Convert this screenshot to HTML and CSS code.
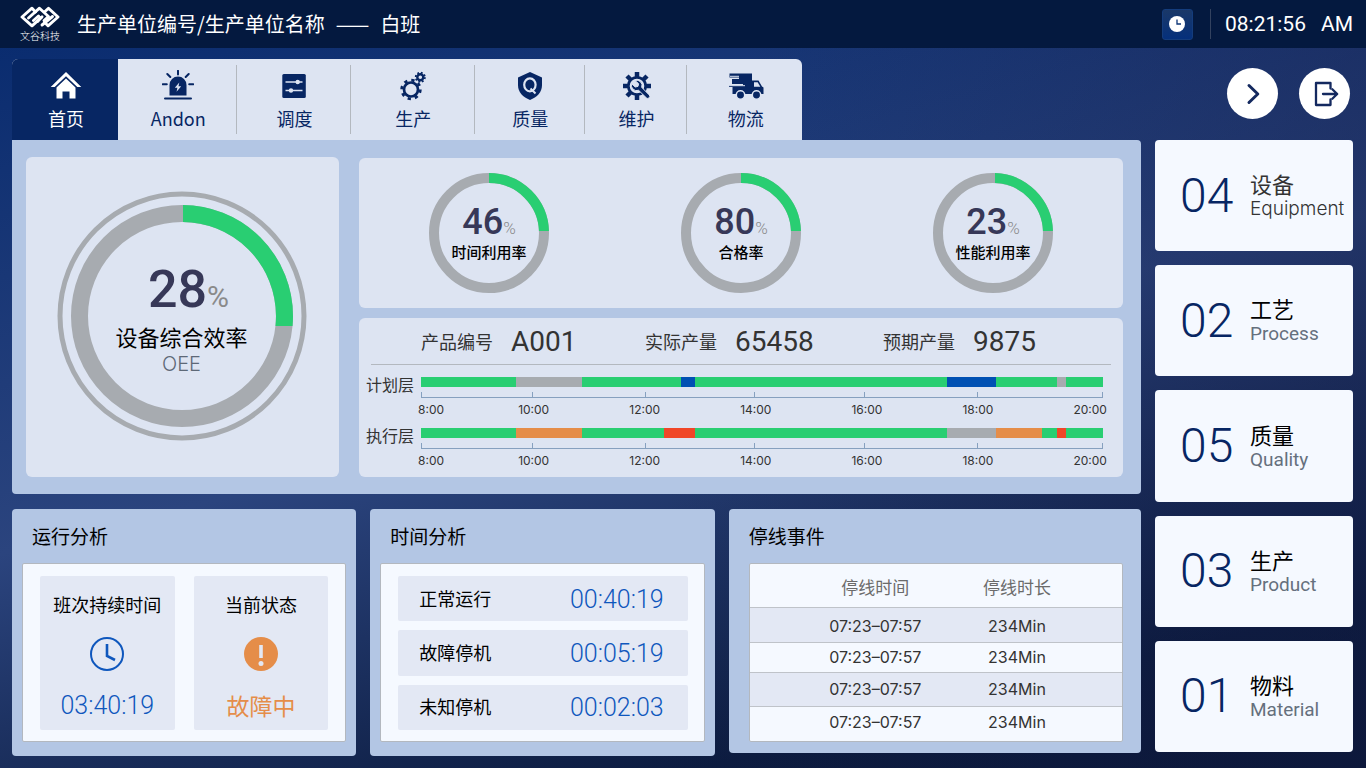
FILE: index.html
```html
<!DOCTYPE html>
<html lang="zh-CN">
<head>
<meta charset="utf-8">
<meta name="viewport" content="width=device-width, initial-scale=1">
<title>生产单位看板</title>
<link rel="stylesheet" href="styles.css">
</head>
<body>
<header class="topbar">
  <div class="brand">
    <svg class="brand-mark" viewBox="0 0 40 22" fill="none" stroke="currentColor" stroke-width="2.9" stroke-linejoin="round" stroke-linecap="round" aria-hidden="true">
      <path d="M15.500 6 12 2.200 2 11l10 8.800 10-9"/>
      <path d="M8.500 12 19.500 2.200l9 8.300-4.500 4"/>
      <path d="M13.500 14.500 18.500 10M17.500 15.500 21 11.500M24.500 16.200 28 19.800 38 11 28.500 2.200 25 5.500"/>
      <path d="M22 19 32.500 10.500"/>
    </svg>
    <span class="brand-name">文谷科技</span>
  </div>
  <h1 class="title"><span>生产单位编号/生产单位名称</span><span>——</span><span>白班</span></h1>
  <div class="clock">
    <span class="clock-icon">
      <svg viewBox="0 0 16 16" width="16" height="16" aria-hidden="true"><circle cx="8" cy="8" r="8" fill="#fff"/><path d="M8 3.500V8h4" fill="none" stroke="#0d3577" stroke-width="1.300"/></svg>
    </span>
    <time class="clock-time"><span>08:21:56</span><span>AM</span></time>
  </div>
</header>

<main class="layout">
  <nav class="tabs">
    <a class="tab tab-active" href="#home">
      <svg viewBox="0 0 32 32" aria-hidden="true"><path d="M16 2 0.700 17h4L16 6.300 27.300 17h4z"/><path d="M16 8.500 6.500 17.500V28.500h6V21.500h7v7h6v-11z"/></svg>
      <span>首页</span>
    </a>
    <a class="tab" href="#andon">
      <svg viewBox="0 0 32 32" aria-hidden="true"><path d="M7.500 25.500V15a8.500 8.500 0 0 1 17 0v10.500z"/><path d="M17.300 12.500 12.800 17.700h2.600l-.8 4 4.600-5.400h-2.700z" fill="#dde4f2"/><path d="M3 28.500h26M16 .800v3.600M5.300 4l3 3M26.700 4l-3 3M.800 14.200h4M27.200 14.200h4" fill="none" stroke="currentColor" stroke-width="2" stroke-linecap="round"/></svg>
      <span>Andon</span>
    </a>
    <a class="tab" href="#schedule">
      <svg viewBox="0 0 32 32" aria-hidden="true"><rect x="4.300" y="4" width="23.500" height="24" rx="1.500"/><path d="M7.500 12h17M7.500 20.500h17" stroke="#dde4f2" stroke-width="1.500"/><circle cx="19.700" cy="12" r="2.200" fill="#dde4f2"/><circle cx="13" cy="20.500" r="2.200" fill="#dde4f2"/></svg>
      <span>调度</span>
    </a>
    <a class="tab" href="#production">
      <svg viewBox="0 0 32 32" fill="none" stroke="currentColor" aria-hidden="true"><circle cx="14" cy="19.500" r="7" stroke-width="2.700"/><circle cx="14" cy="19.500" r="9.300" stroke-width="2.800" stroke-dasharray="3.250 4.055"/><circle cx="23.300" cy="7.300" r="3" stroke-width="2.400"/><circle cx="23.300" cy="7.300" r="4.600" stroke-width="1.800" stroke-dasharray="1.800 1.813"/></svg>
      <span>生产</span>
    </a>
    <a class="tab" href="#quality">
      <svg viewBox="0 0 32 32" aria-hidden="true"><path d="M16 2 28 7.500V15c0 7.500-5 12-12 15C9 27 4 22.500 4 15V7.500z"/><ellipse cx="15.900" cy="14.800" rx="5.700" ry="6.500" fill="none" stroke="#dde4f2" stroke-width="2.200"/><path d="M16.500 18.500 21.500 23.500" stroke="#dde4f2" stroke-width="2"/></svg>
      <span>质量</span>
    </a>
    <a class="tab" href="#maintenance">
      <svg viewBox="0 0 32 32" aria-hidden="true"><g fill="none" stroke="currentColor"><circle cx="16" cy="16" r="8.700" stroke-width="2.800"/><path stroke-width="4.500" d="M16 2v5M16 25v5M2 16h5M25 16h5M6 6l4 4M22 10l4-4M6 26l4-4"/></g><path d="M14 10.500a5.300 5.300 0 0 1 6.700 6.800l7.500 7.600a2 2 0 0 1-2.900 2.900l-7.700-7.500a5.300 5.300 0 0 1-6.900-6.600l3.500 3.300 2.800-.6.600-2.700z" stroke="#dde4f2" stroke-width="1"/></svg>
      <span>维护</span>
    </a>
    <a class="tab" href="#logistics">
      <svg class="wide" viewBox="0 0 36 32" aria-hidden="true"><path d="M1.500 3.500H24v20.500H4.500V17H1v-1.500h14V14H4V9h7V7.500H1.500z"/><path d="M23 10.500h7.500l3.500 6 1.500 1V24H23z"/><path d="M26 12.200h3.700l2.600 4.500H26z" fill="#dde4f2"/><path d="M1 12.700h3M1 15.700h16M2 6.300h9" stroke="#dde4f2" stroke-width="1"/><g stroke="#dde4f2" stroke-width="1.500"><circle cx="12.500" cy="25" r="4.200"/><circle cx="28.500" cy="25" r="4.200"/></g></svg>
      <span>物流</span>
    </a>
  </nav>

  <div class="actions">
    <button class="round-btn" type="button" aria-label="下一页">
      <svg viewBox="0 0 28 28" aria-hidden="true"><path d="M10 5.500 18.800 14 10 22.500" stroke-width="3"/></svg>
    </button>
    <button class="round-btn" type="button" aria-label="退出">
      <svg viewBox="0 0 28 28" aria-hidden="true"><path d="M19.500 8.500V3H5v22h14.500v-5.500" stroke-width="2.300"/><path d="M12 14h14M21.300 9.200 26.200 14l-4.900 4.800" stroke-width="2.300"/></svg>
    </button>
  </div>

  <div class="content">
    <section class="overview">
      <article class="card oee">
        <div class="gauge">
          <svg viewBox="0 0 250 250" fill="none" aria-hidden="true">
            <defs><clipPath id="arc-oee"><rect x="126" y="0" width="124" height="135"/></clipPath></defs>
            <circle class="ring-track" cx="125" cy="125" r="122" stroke-width="5"/>
            <circle class="ring-track" cx="125" cy="125" r="102.500" stroke-width="17"/>
            <circle class="ring-value" cx="125" cy="125" r="102.500" stroke-width="17" clip-path="url(#arc-oee)"/>
          </svg>
          <div class="gauge-text">
            <p class="gauge-num">28<small>%</small></p>
            <p class="gauge-label">设备综合效率</p>
            <p class="gauge-sub">OEE</p>
          </div>
        </div>
      </article>

      <div class="overview-side">
        <article class="card kpis">
          <div class="gauge gauge-small">
            <svg viewBox="0 0 120 120" fill="none" aria-hidden="true">
              <defs><clipPath id="arc-small"><rect x="60" y="0" width="60" height="58"/></clipPath></defs>
              <circle class="ring-track" cx="60" cy="60" r="55" stroke-width="10"/>
              <circle class="ring-value" cx="60" cy="60" r="55" stroke-width="10" clip-path="url(#arc-small)"/>
            </svg>
            <div class="gauge-text"><p class="gauge-num">46<small>%</small></p><p class="gauge-label">时间利用率</p></div>
          </div>
          <div class="gauge gauge-small">
            <svg viewBox="0 0 120 120" fill="none" aria-hidden="true">
              <circle class="ring-track" cx="60" cy="60" r="55" stroke-width="10"/>
              <circle class="ring-value" cx="60" cy="60" r="55" stroke-width="10" clip-path="url(#arc-small)"/>
            </svg>
            <div class="gauge-text"><p class="gauge-num">80<small>%</small></p><p class="gauge-label">合格率</p></div>
          </div>
          <div class="gauge gauge-small">
            <svg viewBox="0 0 120 120" fill="none" aria-hidden="true">
              <defs><clipPath id="arc-perf"><rect x="62" y="0" width="58" height="58"/></clipPath></defs>
              <circle class="ring-track" cx="60" cy="60" r="55" stroke-width="10"/>
              <circle class="ring-value" cx="60" cy="60" r="55" stroke-width="10" clip-path="url(#arc-perf)"/>
            </svg>
            <div class="gauge-text"><p class="gauge-num">23<small>%</small></p><p class="gauge-label">性能利用率</p></div>
          </div>
        </article>

        <article class="card output">
          <dl class="stats">
            <div class="stat"><dt>产品编号</dt><dd>A001</dd></div>
            <div class="stat"><dt>实际产量</dt><dd>65458</dd></div>
            <div class="stat"><dt>预期产量</dt><dd>9875</dd></div>
          </dl>
          <div class="timeline">
            <span class="timeline-name">计划层</span>
            <div class="timeline-body">
              <div class="bar">
                <i class="run" style="flex-grow:95"></i><i class="idle" style="flex-grow:66"></i><i class="run" style="flex-grow:99"></i><i class="plan" style="flex-grow:14"></i><i class="run" style="flex-grow:252"></i><i class="plan" style="flex-grow:49"></i><i class="run" style="flex-grow:61"></i><i class="idle" style="flex-grow:9"></i><i class="run" style="flex-grow:37"></i>
              </div>
              <div class="axis"><i style="flex-grow:111"></i><i style="flex-grow:113"></i><i style="flex-grow:109"></i><i style="flex-grow:111"></i><i style="flex-grow:113"></i><i style="flex-grow:125"></i></div>
              <div class="hours"><span>8:00</span><span>10:00</span><span>12:00</span><span>14:00</span><span>16:00</span><span>18:00</span><span>20:00</span></div>
            </div>
          </div>
          <div class="timeline">
            <span class="timeline-name">执行层</span>
            <div class="timeline-body">
              <div class="bar">
                <i class="run" style="flex-grow:95"></i><i class="warn" style="flex-grow:66"></i><i class="run" style="flex-grow:82"></i><i class="stop" style="flex-grow:31"></i><i class="run" style="flex-grow:252"></i><i class="idle" style="flex-grow:49"></i><i class="warn" style="flex-grow:46"></i><i class="run" style="flex-grow:15"></i><i class="stop" style="flex-grow:9"></i><i class="run" style="flex-grow:37"></i>
              </div>
              <div class="axis"><i style="flex-grow:111"></i><i style="flex-grow:113"></i><i style="flex-grow:109"></i><i style="flex-grow:111"></i><i style="flex-grow:113"></i><i style="flex-grow:125"></i></div>
              <div class="hours"><span>8:00</span><span>10:00</span><span>12:00</span><span>14:00</span><span>16:00</span><span>18:00</span><span>20:00</span></div>
            </div>
          </div>
        </article>
      </div>
    </section>

    <div class="panels">
      <section class="panel">
        <h2>运行分析</h2>
        <div class="box tiles">
          <div class="tile">
            <h3>班次持续时间</h3>
            <svg viewBox="0 0 34 34" width="34" height="34" fill="none" stroke="#0f57bd" aria-hidden="true"><circle cx="17" cy="17" r="16" stroke-width="2"/><path d="M17 7v12l8 4" stroke-width="2.600"/></svg>
            <p class="digits">03:40:19</p>
          </div>
          <div class="tile">
            <h3>当前状态</h3>
            <svg viewBox="0 0 34 34" width="34" height="34" aria-hidden="true"><circle cx="17" cy="17" r="17" fill="#e58d49"/><path d="M17 8v13" stroke="#e3e8f4" stroke-width="3.600"/><circle cx="17" cy="26.500" r="2.500" fill="#e3e8f4"/></svg>
            <p class="state">故障中</p>
          </div>
        </div>
      </section>

      <section class="panel">
        <h2>时间分析</h2>
        <dl class="box times">
          <div><dt>正常运行</dt><dd class="digits">00:40:19</dd></div>
          <div><dt>故障停机</dt><dd class="digits">00:05:19</dd></div>
          <div><dt>未知停机</dt><dd class="digits">00:02:03</dd></div>
        </dl>
      </section>

      <section class="panel panel-events">
        <h2>停线事件</h2>
        <div class="box">
          <table class="events">
            <thead><tr><th scope="col">停线时间</th><th scope="col">停线时长</th></tr></thead>
            <tbody>
              <tr><td>07:23–07:57</td><td>234Min</td></tr>
              <tr><td>07:23–07:57</td><td>234Min</td></tr>
              <tr><td>07:23–07:57</td><td>234Min</td></tr>
              <tr><td>07:23–07:57</td><td>234Min</td></tr>
            </tbody>
          </table>
        </div>
      </section>
    </div>
  </div>

  <aside class="sidebar">
    <a class="count count-current" href="#equipment"><strong>04</strong><span class="count-text"><b>设备</b><em>Equipment</em></span></a>
    <a class="count" href="#process"><strong>02</strong><span class="count-text"><b>工艺</b><em>Process</em></span></a>
    <a class="count" href="#quality-issues"><strong>05</strong><span class="count-text"><b>质量</b><em>Quality</em></span></a>
    <a class="count" href="#product"><strong>03</strong><span class="count-text"><b>生产</b><em>Product</em></span></a>
    <a class="count" href="#material"><strong>01</strong><span class="count-text"><b>物料</b><em>Material</em></span></a>
  </aside>
</main>
</body>
</html>
```
FILE: styles.css
```css
* { box-sizing: border-box; }

body, h1, h2, h3, p, dl, dd { margin: 0; font-weight: inherit; }

body {
  display: flex;
  flex-direction: column;
  min-height: 100vh;
  font-family: "Noto Sans CJK SC", sans-serif;
  font-weight: 400;
  color: #000;
  background:
    linear-gradient(100deg, rgba(18, 24, 64, 0) 50%, rgba(18, 24, 64, .4) 100%),
    linear-gradient(166deg, #072a6e 0%, #2b447e 50%, #0c1c40 85%, #0a1838 100%);
}

a { color: inherit; text-decoration: none; }
i, em { font-style: normal; }

/* Top bar */
.topbar {
  display: flex;
  align-items: center;
  height: 48px;
  padding: 0 13px 0 20px;
  background: #04193f;
  color: #fff;
}
.brand {
  display: flex;
  flex-direction: column;
  align-items: center;
  gap: 1px;
  margin-right: 17px;
}
.brand-mark { width: 40px; height: 22px; }
.brand-name { font-size: 10px; line-height: 14px; font-weight: 300; }
.title {
  display: flex;
  gap: 11px;
  font-size: 20px;
  line-height: 24px;
  font-weight: 400;
}
.clock {
  display: flex;
  align-items: center;
  margin-left: auto;
}
.clock-icon {
  display: grid;
  place-items: center;
  width: 31px;
  height: 31px;
  margin-right: 17px;
  border: 1px solid #143c7c;
  border-radius: 3px;
  background: linear-gradient(#1a3868, #05307c);
}
.clock-time {
  display: flex;
  gap: 15px;
  padding-left: 14px;
  border-left: 1px solid #33425f;
  font-family: Roboto, sans-serif;
  font-size: 21px;
  line-height: 30px;
}

/* Page grid */
.layout {
  flex: 1;
  display: grid;
  grid-template-columns: minmax(0, 1fr) 198px;
  grid-template-rows: 81px 1fr;
  column-gap: 14px;
  padding: 11px 13px 12px 12px;
}

/* Tabs */
.tabs {
  display: grid;
  grid-template-columns: 106fr 119fr 113fr 124fr 110fr 102fr 115fr;
  width: 70%;
  border-radius: 6px 6px 0 0;
  overflow: hidden;
  background: #dde4f2;
}
.tab {
  display: flex;
  flex-direction: column;
  align-items: center;
  gap: 4px;
  margin: 6px 0;
  padding: 5px 0 0 2px;
  border-right: 1px solid #b3b8bf;
  color: #072663;
  font-size: 18px;
  line-height: 24px;
}
.tab:last-child { border-right: 0; }
.tab svg { width: 32px; height: 32px; fill: currentColor; }
.tab svg[fill="none"] { fill: none; }
.tab svg.wide { width: 36px; }
.tab-active {
  margin: 0;
  padding-top: 11px;
  border-right: 0;
  background: #072663;
  color: #fff;
}

.actions {
  display: flex;
  justify-content: flex-end;
  align-items: flex-start;
  gap: 21px;
  padding: 9px 3px 0 0;
}
.round-btn {
  display: grid;
  place-items: center;
  width: 51px;
  height: 51px;
  padding: 0;
  border: 0;
  border-radius: 50%;
  background: #fff;
  cursor: pointer;
}
.round-btn svg {
  width: 28px;
  height: 28px;
  fill: none;
  stroke: #14295f;
  stroke-linecap: round;
  stroke-linejoin: round;
}

/* Overview */
.content {
  display: flex;
  flex-direction: column;
  gap: 15px;
}
.overview {
  display: grid;
  grid-template-columns: 313fr 764fr;
  gap: 20px;
  padding: 17px 18px 17px 14px;
  border-radius: 0 4px 4px 4px;
  background: #b3c6e4;
}
.card {
  border-radius: 6px;
  background: #dde4f2;
}
.oee {
  display: grid;
  place-items: center;
  padding: 0 2px 2px 0;
}
.gauge {
  display: grid;
  place-items: center;
  width: 250px;
}
.gauge > * { grid-area: 1 / 1; }
.gauge > svg { width: 100%; display: block; }
.ring-track { stroke: #a7abb0; }
.ring-value { stroke: #29ce72; }
.gauge-text { padding-top: 8px; text-align: center; }
.gauge-num {
  padding-left: 14px;
  font-family: Roboto, sans-serif;
  font-size: 52px;
  line-height: 56px;
  font-weight: 500;
  color: #373858;
}
.gauge-num small {
  font-size: 30px;
  line-height: 30px;
  font-weight: 400;
  color: #8a8a8a;
}
.gauge-label { margin-top: 4px; font-size: 22px; line-height: 28px; }
.gauge-sub {
  font-family: Inter, sans-serif;
  font-size: 20px;
  line-height: 28px;
  font-weight: 300;
  color: #5d6877;
}

.overview-side {
  display: grid;
  grid-template-rows: 150px auto;
  gap: 10px;
  padding-top: 1px;
}
.kpis {
  display: grid;
  grid-template-columns: repeat(3, 1fr);
  place-items: center;
  padding: 0 4px;
}
.gauge-small { width: 120px; }
.gauge-small .gauge-text { padding: 0; }
.gauge-small .gauge-num { padding: 0; font-size: 36px; line-height: 36px; }
.gauge-small .gauge-num small { font-size: 17px; line-height: 17px; font-weight: 300; }
.gauge-small .gauge-label { margin: 1px 0 0; font-size: 15px; line-height: 22px; font-weight: 500; }

.output { padding: 0 12px; }
.stats {
  display: grid;
  grid-template-columns: 224fr 238fr 228fr;
  height: 47px;
  margin-bottom: 12px;
  padding-left: 50px;
  border-bottom: 1px solid #b3b8bf;
  color: #333;
}
.stat {
  display: flex;
  align-items: center;
  gap: 18px;
}
.stat dt { font-size: 18px; }
.stat dd { padding-top: 2px; font-family: Roboto, sans-serif; font-size: 28px; line-height: 44px; }

.timeline {
  display: flex;
  gap: 7px;
  height: 51px;
  margin: 0 8px 0 -5px;
}
.timeline:last-child { height: 49px; }
.timeline-name {
  flex: none;
  font-size: 16px;
  line-height: 14px;
  color: #333;
}
.timeline-body { flex: 1; }
.bar { display: flex; height: 10px; }
.bar i { flex-basis: 0; }
.run { background: #29ce72; }
.idle { background: #a7abb0; }
.plan { background: #0050b3; }
.warn { background: #e58d49; }
.stop { background: #f04628; }
.axis {
  display: flex;
  height: 6px;
  margin-top: 5px;
  border-bottom: 1px solid #86a0bf;
}
.axis i { flex-basis: 0; border-left: 1px solid #86a0bf; }
.axis i:last-child { border-right: 1px solid #86a0bf; }
.hours {
  display: flex;
  justify-content: space-between;
  margin: 2px -4px 0 -3px;
  font-family: Inter, sans-serif;
  font-size: 12px;
  line-height: 20px;
  color: #333;
}
.hours span:first-child { margin-right: -6px; }

/* Lower panels */
.panels {
  display: grid;
  grid-template-columns: 344fr 344fr 412fr;
  gap: 14px;
}
.panel {
  display: flex;
  flex-direction: column;
  padding: 0 10px 14px;
  border-radius: 4px;
  background: #b3c6e4;
}
.panel h2 {
  padding-left: 10px;
  font-size: 19px;
  line-height: 54px;
  font-weight: 400;
}
.panel-events {
  margin-bottom: 3px;
  padding: 0 18px 11px 20px;
}
.panel-events h2 { padding-left: 0; }
.box {
  flex: 1;
  border: 1px solid #b3b8bf;
  border-radius: 2px;
  background: #f5f9ff;
}
.tiles {
  display: grid;
  grid-template-columns: 1fr 1fr;
  gap: 19px;
  padding: 12px 17px 11px;
}
.tile {
  display: flex;
  flex-direction: column;
  align-items: center;
  gap: 20px;
  padding: 15px 0 9px;
  border-radius: 2px;
  background: #e3e8f4;
}
.tile h3 { font-size: 18px; line-height: 26px; font-weight: 400; }
.digits {
  font-family: Roboto, sans-serif;
  font-size: 25px;
  line-height: 30px;
  font-weight: 300;
  color: #0f57bd;
}
.state { font-size: 23px; line-height: 28px; color: #e58d49; }

.times {
  display: flex;
  flex-direction: column;
  gap: 9px;
  padding: 12px 16px 11px 17px;
}
.times div {
  flex: 1;
  display: flex;
  align-items: center;
  justify-content: space-between;
  min-height: 45px;
  padding: 0 24px 0 21px;
  border-radius: 2px;
  background: #e3e8f4;
}
.times dt { padding-bottom: 2px; font-size: 18px; line-height: 26px; }
.times dd { padding-top: 2px; }

.events {
  width: 100%;
  border-collapse: collapse;
  text-align: center;
}
.events th {
  width: 47%;
  height: 43px;
  padding: 4px 35px 0 0;
  font-size: 17px;
  line-height: 24px;
  font-weight: 400;
  color: #6b6b6b;
}
.events td {
  height: 34px;
  padding: 0 35px 0 0;
  border-top: 1px solid #bfc3c9;
  font-family: Inter, sans-serif;
  font-size: 16px;
  line-height: 22px;
  color: #333;
}
.events th:first-child,
.events td:first-child { width: 53%; padding-left: 54px; padding-right: 0; }
.events tbody tr:nth-child(odd) { background: #e3e8f4; }
.events tbody tr:nth-child(1) td { height: 35px; padding-top: 3px; }
.events tbody tr:nth-child(2) td { height: 30px; }
.events tbody tr:nth-child(4) td { padding-bottom: 2px; }

/* Sidebar counters */
.sidebar {
  display: flex;
  flex-direction: column;
  gap: 14px;
  margin-bottom: 4px;
}
.count {
  flex: 1;
  display: flex;
  align-items: center;
  gap: 15px;
  padding-left: 25px;
  border-radius: 4px;
  background: #f5f9ff;
}
.count strong {
  flex: none;
  width: 55px;
  font-family: Roboto, sans-serif;
  font-size: 48px;
  line-height: 60px;
  font-weight: 300;
  color: #072663;
}
.count-text { display: flex; flex-direction: column; }
.count b { font-size: 22px; line-height: 27px; font-weight: 400; }
.count em { font-family: Roboto, sans-serif; font-size: 19px; line-height: 24px; color: #65707d; }
.count-current b,
.count-current em { color: #333; }
.count-current em { font-family: Inter, sans-serif; font-weight: 300; }
```
